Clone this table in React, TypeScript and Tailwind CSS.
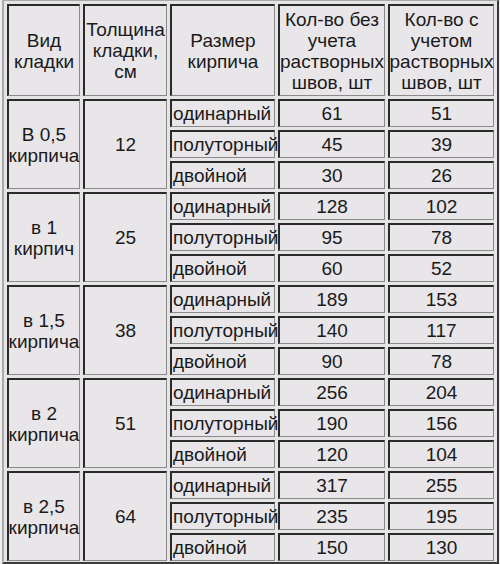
const groups = [
  { kind: ["В 0,5", "кирпича"], thick: "12", rows: [["61", "51"], ["45", "39"], ["30", "26"]] },
  { kind: ["в 1", "кирпич"], thick: "25", rows: [["128", "102"], ["95", "78"], ["60", "52"]] },
  { kind: ["в 1,5", "кирпича"], thick: "38", rows: [["189", "153"], ["140", "117"], ["90", "78"]] },
  { kind: ["в 2", "кирпича"], thick: "51", rows: [["256", "204"], ["190", "156"], ["120", "104"]] },
  { kind: ["в 2,5", "кирпича"], thick: "64", rows: [["317", "255"], ["235", "195"], ["150", "130"]] },
];

const sizes = ["одинарный", "полуторный", "двойной"];

// inset cell border like an old border=1 table
const cell =
  "bg-[#e9e6ea] border-t-2 border-l-2 border-b border-r border-t-[#2a2a2a] border-l-[#2a2a2a] border-b-[#8a8a8a] border-r-[#8a8a8a] flex items-center justify-center text-center";

export default function App() {
  return (
    <div
      className="w-[500px] h-[564px] bg-[#efedef] overflow-hidden text-[19px] leading-[21px] text-[#1a1a1a]"
      style={{ fontFamily: '"Liberation Sans", Arial, sans-serif' }}
    >
      <div className="ml-[2px] w-[497px] border-t border-l-2 border-r-2 border-b-2 border-t-[#a9a9a9] border-l-[#a9a9a9] border-r-[#3a3a3a] border-b-[#3a3a3a] bg-[#e7e4e8] px-[3px] pt-[3px] pb-[1px]">
        <div className="grid grid-cols-[73px_84px_105px_107px_106px] grid-rows-[92px_repeat(15,28px)] gap-[3px]">
          <div className={cell}>
            Вид
            <br />
            кладки
          </div>
          <div className={cell}>
            Толщина
            <br />
            кладки,
            <br />
            см
          </div>
          <div className={cell}>
            Размер
            <br />
            кирпича
          </div>
          <div className={cell}>
            Кол-во без
            <br />
            учета
            <br />
            растворных
            <br />
            швов, шт
          </div>
          <div className={cell}>
            Кол-во с
            <br />
            учетом
            <br />
            растворных
            <br />
            швов, шт
          </div>

          {groups.map((g) =>
            g.rows.map((r, i) => (
              <>
                {i === 0 && (
                  <>
                    <div className={`${cell} row-span-3`}>
                      {g.kind[0]}
                      <br />
                      {g.kind[1]}
                    </div>
                    <div className={`${cell} row-span-3`}>{g.thick}</div>
                  </>
                )}
                <div className={`${cell} col-start-3 !justify-start pl-[1px]`}>{sizes[i]}</div>
                <div className={cell}>{r[0]}</div>
                <div className={cell}>{r[1]}</div>
              </>
            ))
          )}
        </div>
      </div>
    </div>
  );
}
